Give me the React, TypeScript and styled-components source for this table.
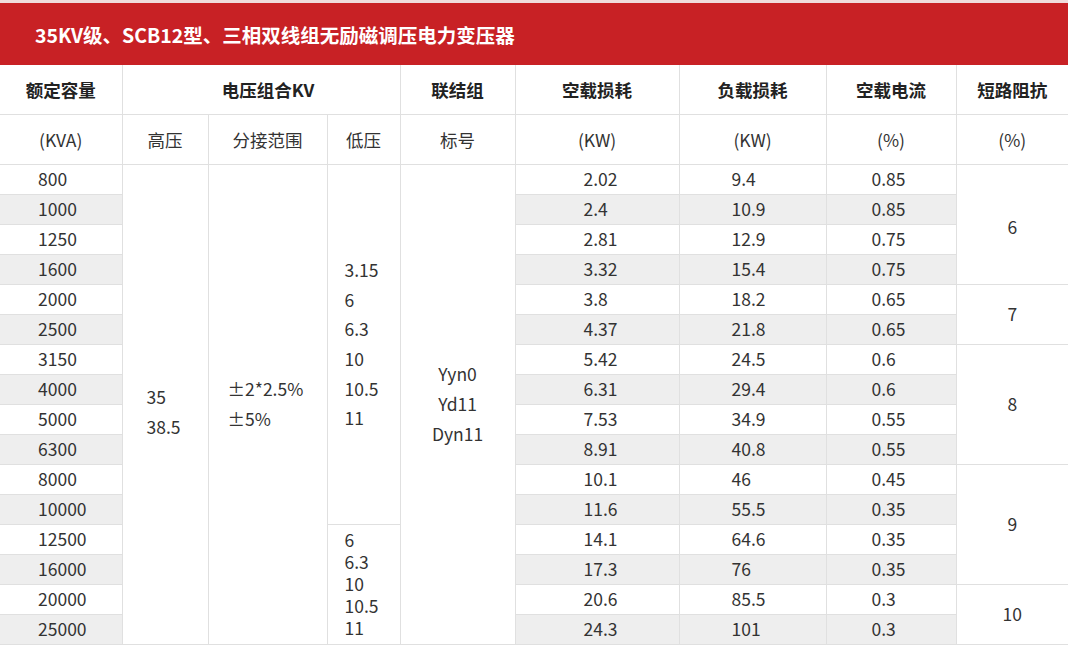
import React from 'react'
import styled, { createGlobalStyle } from 'styled-components'

const GlobalStyle = createGlobalStyle`
  html, body {
    margin: 0;
    padding: 0;
    background: #ffffff;
  }
  body {
    font-family: "Noto Sans CJK SC", "Noto Sans", sans-serif;
    color: #333333;
  }
`

const Page = styled.div`
  width: 1068px;
  border-top: 3px solid #f0dcdc;
`

const TitleBar = styled.div`
  height: 62px;
  background: #c82125;
  display: flex;
  align-items: center;
  padding-left: 35px;
  color: #ffffff;
  font-size: 19.5px;
  font-weight: 700;
`

const Table = styled.table`
  width: 1068px;
  border-collapse: collapse;
  table-layout: fixed;
  font-size: 17.5px;
`

const HeadRow = styled.tr<{ $h: number }>`
  height: ${(p) => p.$h}px;
`

const HeadCell = styled.th<{ $bold?: boolean; $shift?: number }>`
  border: 1px solid #e0e0e0;
  border-top: none;
  font-weight: ${(p) => (p.$bold ? 700 : 400)};
  color: ${(p) => (p.$bold ? '#222222' : '#333333')};
  text-align: center;
  vertical-align: middle;
  padding: 0 0 0 ${(p) => p.$shift ?? 0}px;
  white-space: nowrap;
  &:first-child {
    border-left: none;
  }
  &:last-child {
    border-right: none;
  }
`

const BodyRow = styled.tr`
  height: 30px;
`

const Cell = styled.td<{ $pad?: number; $gray?: boolean; $center?: boolean }>`
  border: 1px solid #e0e0e0;
  padding: 0 0 0 ${(p) => p.$pad ?? 0}px;
  text-align: ${(p) => (p.$center ? 'center' : 'left')};
  background: ${(p) => (p.$gray ? '#eeeeee' : '#ffffff')};
  line-height: 28px;
  vertical-align: middle;
  white-space: nowrap;
  &:first-child {
    border-left: none;
  }
`

const MergedCell = styled.td<{ $pad?: number; $center?: boolean; $lh?: number; $top?: number; $edge?: boolean }>`
  border: 1px solid #e0e0e0;
  ${(p) => (p.$edge ? 'border-right: none;' : '')}
  padding: ${(p) => p.$top ?? 0}px 0 0 ${(p) => p.$pad ?? 0}px;
  text-align: ${(p) => (p.$center ? 'center' : 'left')};
  line-height: ${(p) => p.$lh ?? 30}px;
  vertical-align: middle;
  background: #ffffff;
  white-space: nowrap;
`

const colWidths = [122, 86, 119, 73, 115, 164, 147, 130, 112]

const rows: [string, string, string, string][] = [
  ['800', '2.02', '9.4', '0.85'],
  ['1000', '2.4', '10.9', '0.85'],
  ['1250', '2.81', '12.9', '0.75'],
  ['1600', '3.32', '15.4', '0.75'],
  ['2000', '3.8', '18.2', '0.65'],
  ['2500', '4.37', '21.8', '0.65'],
  ['3150', '5.42', '24.5', '0.6'],
  ['4000', '6.31', '29.4', '0.6'],
  ['5000', '7.53', '34.9', '0.55'],
  ['6300', '8.91', '40.8', '0.55'],
  ['8000', '10.1', '46', '0.45'],
  ['10000', '11.6', '55.5', '0.35'],
  ['12500', '14.1', '64.6', '0.35'],
  ['16000', '17.3', '76', '0.35'],
  ['20000', '20.6', '85.5', '0.3'],
  ['25000', '24.3', '101', '0.3'],
]

// short-circuit impedance groups: start row -> [span, value]
const impedance: Record<number, [number, string]> = {
  0: [4, '6'],
  4: [2, '7'],
  6: [4, '8'],
  10: [4, '9'],
  14: [2, '10'],
}

const Lines: React.FC<{ items: string[] }> = ({ items }) => (
  <>
    {items.map((t, i) => (
      <div key={i}>{t}</div>
    ))}
  </>
)

const App: React.FC = () => {
  return (
    <>
      <GlobalStyle />
      <Page>
        <TitleBar>35KV级、SCB12型、三相双线组无励磁调压电力变压器</TitleBar>
        <Table>
          <colgroup>
            {colWidths.map((w, i) => (
              <col key={i} style={{ width: w }} />
            ))}
          </colgroup>
          <thead>
            <HeadRow $h={49}>
              <HeadCell $bold>额定容量</HeadCell>
              <HeadCell $bold colSpan={3} $shift={14}>电压组合KV</HeadCell>
              <HeadCell $bold>联结组</HeadCell>
              <HeadCell $bold>空载损耗</HeadCell>
              <HeadCell $bold>负载损耗</HeadCell>
              <HeadCell $bold>空载电流</HeadCell>
              <HeadCell $bold>短路阻抗</HeadCell>
            </HeadRow>
            <HeadRow $h={50}>
              <HeadCell>(KVA)</HeadCell>
              <HeadCell>高压</HeadCell>
              <HeadCell>分接范围</HeadCell>
              <HeadCell>低压</HeadCell>
              <HeadCell>标号</HeadCell>
              <HeadCell>(KW)</HeadCell>
              <HeadCell>(KW)</HeadCell>
              <HeadCell>(%)</HeadCell>
              <HeadCell>(%)</HeadCell>
            </HeadRow>
          </thead>
          <tbody>
            {rows.map((r, i) => {
              const gray = i % 2 === 1
              const imp = impedance[i]
              return (
                <BodyRow key={r[0]}>
                  <Cell $pad={38} $gray={gray}>{r[0]}</Cell>
                  {i === 0 && (
                    <>
                      <MergedCell rowSpan={16} $pad={24} $top={16}>
                        <Lines items={['35', '38.5']} />
                      </MergedCell>
                      <MergedCell rowSpan={16} $pad={19}>
                        <Lines items={['±2*2.5%', '±5%']} />
                      </MergedCell>
                      <MergedCell rowSpan={12} $pad={17} $lh={29.6}>
                        <Lines items={['3.15', '6', '6.3', '10', '10.5', '11']} />
                      </MergedCell>
                      <MergedCell rowSpan={16} $center>
                        <Lines items={['Yyn0', 'Yd11', 'Dyn11']} />
                      </MergedCell>
                    </>
                  )}
                  {i === 12 && (
                    <MergedCell rowSpan={4} $pad={17} $lh={22}>
                      <Lines items={['6', '6.3', '10', '10.5', '11']} />
                    </MergedCell>
                  )}
                  <Cell $pad={68} $gray={gray}>{r[1]}</Cell>
                  <Cell $pad={52} $gray={gray}>{r[2]}</Cell>
                  <Cell $pad={45} $gray={gray}>{r[3]}</Cell>
                  {imp && (
                    <MergedCell rowSpan={imp[0]} $center $edge $top={i === 0 ? 6 : 0}>
                      {imp[1]}
                    </MergedCell>
                  )}
                </BodyRow>
              )
            })}
          </tbody>
        </Table>
      </Page>
    </>
  )
}

export default App
